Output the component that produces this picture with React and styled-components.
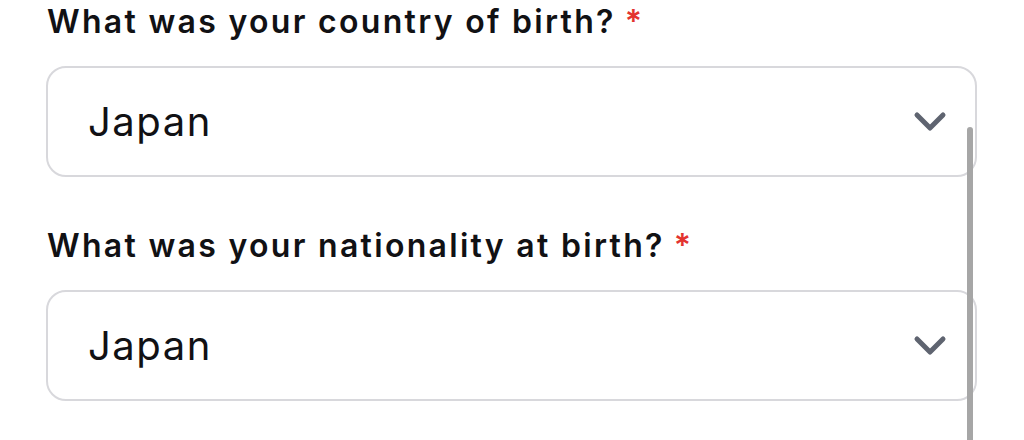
import React from 'react'
import styled, { createGlobalStyle } from 'styled-components'

const Global = createGlobalStyle`
  html, body {
    margin: 0;
    padding: 0;
    background: #fff;
  }
  body {
    font-family: Inter, "Noto Sans", sans-serif;
    color: #111114;
  }
`;

const Page = styled.div`
  position: relative;
  width: 1024px;
  height: 440px;
  overflow: hidden;
  padding: 0 47px 0 46px;
  box-sizing: border-box;
`;

const Field = styled.div`
  display: flex;
  flex-direction: column;
  gap: 22px;
  margin-bottom: 47px;
`;

const Label = styled.div`
  font-size: 32px;
  font-weight: 600;
  line-height: 44px;
  letter-spacing: 2.3px;
  color: #111114;
  padding-left: 1px;
`;

const Required = styled.span`
  color: #e3342f;
  margin-left: 9px;
`;

const Select = styled.div`
  height: 111px;
  box-sizing: border-box;
  border: 2px solid #d8d8dc;
  border-radius: 20px;
  display: flex;
  align-items: center;
  justify-content: space-between;
  padding: 0 28px 0 40px;
  font-size: 40px;
  font-weight: 400;
  letter-spacing: 1.5px;
  color: #111114;
`;

const Chevron = () => (
  <svg width="34" height="21" viewBox="0 0 34 21" fill="none">
    <path d="M4 4 L17 17 L30 4" stroke="#5f6470" strokeWidth="5" strokeLinecap="round" strokeLinejoin="round" />
  </svg>
);

const Scrollbar = styled.div`
  position: absolute;
  left: 967px;
  top: 127px;
  width: 6px;
  bottom: 0;
  background: #a6a6a6;
  border-radius: 3px 3px 0 0;
`;

const questions = [
  { label: 'What was your country of birth?', value: 'Japan' },
  { label: 'What was your nationality at birth?', value: 'Japan' },
];

const App = () => (
  <Page>
    <Global />
    {questions.map((q) => (
      <Field key={q.label}>
        <Label>
          {q.label}
          <Required>*</Required>
        </Label>
        <Select>
          {q.value}
          <Chevron />
        </Select>
      </Field>
    ))}
    <Scrollbar />
  </Page>
);

export default App;
